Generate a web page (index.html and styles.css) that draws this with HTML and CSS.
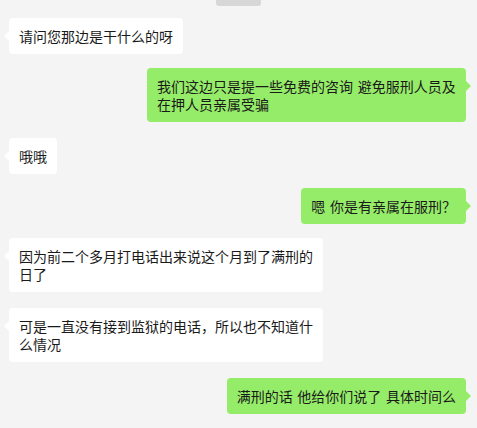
FILE: index.html
```html
<!DOCTYPE html>
<html lang="zh-CN">
<head>
<meta charset="utf-8">
<link rel="stylesheet" href="styles.css">
</head>
<body>
<div class="chat">
  <div class="pill"></div>
  <div class="msg left first"><div class="bubble">请问您那边是干什么的呀</div></div>
  <div class="msg right"><div class="bubble">我们这边只是提一些免费的咨询 避免服刑人员及在押人员亲属受骗</div></div>
  <div class="msg left wide"><div class="bubble">哦哦</div></div>
  <div class="msg right"><div class="bubble">嗯 你是有亲属在服刑？</div></div>
  <div class="msg left"><div class="bubble">因为前二个多月打电话出来说这个月到了满刑的日了</div></div>
  <div class="msg left wide"><div class="bubble">可是一直没有接到监狱的电话，所以也不知道什么情况</div></div>
  <div class="msg right wide"><div class="bubble">满刑的话 他给你们说了 具体时间么</div></div>
</div>
</body>
</html>
```

FILE: styles.css
```css
* { box-sizing: border-box; }
html, body {
  margin: 0;
  padding: 0;
  background: #f4f4f4;
  height: 100%;
  overflow: hidden;
}
body {
  font-family: "Noto Sans CJK SC", "Microsoft YaHei", sans-serif;
  font-size: 14px;
  color: #1a1a1a;
}
.chat {
  position: relative;
  display: flex;
  flex-direction: column;
  padding: 0 11px 0 9px;
}
.pill {
  position: absolute;
  top: 0;
  left: 216px;
  width: 45px;
  height: 6px;
  background: #d7d7d7;
  border-radius: 0 0 3px 3px;
}
.msg {
  display: flex;
  margin-top: 14px;
}
.msg.first { margin-top: 18px; }
.msg.wide { margin-top: 16px; }
.msg.left { justify-content: flex-start; }
.msg.right { justify-content: flex-end; }
.bubble {
  position: relative;
  padding: 9px 10px;
  line-height: 18px;
  border-radius: 4px;
  background: #ffffff;
  max-width: 314px;
  word-spacing: 1.5px;
}
.msg.right .bubble {
  background: #95ec69;
  max-width: 319px;
}
.bubble::before {
  content: "";
  position: absolute;
  top: 13px;
  width: 0;
  height: 0;
  border-top: 5px solid transparent;
  border-bottom: 5px solid transparent;
}
.msg.left .bubble::before {
  left: -5px;
  border-right: 5px solid #ffffff;
}
.msg.right .bubble::before {
  right: -5px;
  border-left: 5px solid #95ec69;
}
```
